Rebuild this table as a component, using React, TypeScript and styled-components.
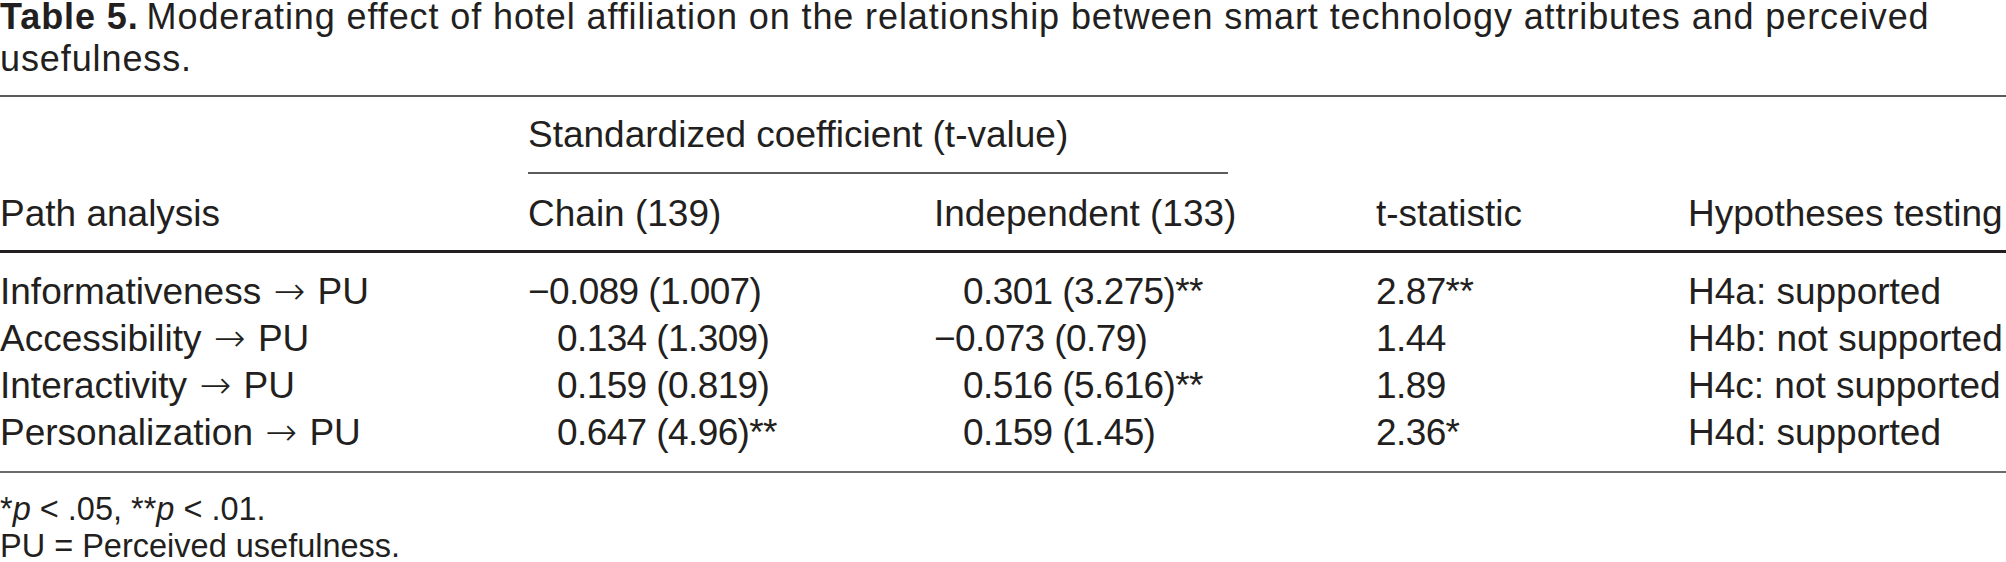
import styled, {createGlobalStyle} from "styled-components";

const GlobalStyle = createGlobalStyle`
  html, body {
    margin: 0;
    padding: 0;
    background: #ffffff;
  }
`;

const COLS = "528px 406px 442px 312px 1fr";

const Page = styled.div`
  font-family: "Liberation Sans", Arial, sans-serif;
  color: #231f20;
  width: 2006px;
`;

const Caption = styled.p`
  margin: -4px 0 15px;
  font-size: 36px;
  line-height: 42px;
  letter-spacing: 0.9px;
`;

const Label = styled.b`
  font-weight: 700;
  margin-right: 8px;
`;

const Head = styled.div`
  border-top: 2px solid #5b5b5b;
  border-bottom: 3px solid #231f20;
  padding-bottom: 13px;
`;

const Row = styled.div`
  display: grid;
  grid-template-columns: ${COLS};
`;

const Spanner = styled.div`
  grid-column: 2 / span 2;
  width: 700px;
  padding-top: 14px;
  padding-bottom: 14px;
  border-bottom: 2px solid #5b5b5b;
  font-size: 37px;
  line-height: 47px;
`;

const LabelRow = styled(Row)`
  padding-top: 16px;
`;

const Cell = styled.div<{$indent?: boolean; $num?: boolean}>`
  font-size: 37px;
  line-height: 47px;
  white-space: nowrap;
  letter-spacing: ${(p) => (p.$num ? "-0.6px" : "0")};
  padding-left: ${(p) => (p.$indent ? "29px" : "0")};
`;

const Arrow = styled.span`
  font-family: "DejaVu Sans", sans-serif;
  font-weight: 300;
  font-size: 38px;
  margin: 0 2px;
`;

const Body = styled.div`
  padding: 15px 0;
  border-bottom: 2px solid #6a6a6a;
`;

const Notes = styled.div`
  margin-top: 18px;
  font-size: 32.5px;
  line-height: 37px;
`;

const Note = styled.p`
  margin: 0;
`;

const rows = [
  {path: "Informativeness", chain: "−0.089 (1.007)", indep: "0.301 (3.275)**", t: "2.87**", h: "H4a: supported"},
  {path: "Accessibility", chain: "0.134 (1.309)", indep: "−0.073 (0.79)", t: "1.44", h: "H4b: not supported"},
  {path: "Interactivity", chain: "0.159 (0.819)", indep: "0.516 (5.616)**", t: "1.89", h: "H4c: not supported"},
  {path: "Personalization", chain: "0.647 (4.96)**", indep: "0.159 (1.45)", t: "2.36*", h: "H4d: supported"},
];

const isNeg = (v: string) => v.startsWith("−");

export default function App() {
  return (
    <Page>
      <GlobalStyle />
      <Caption>
        <Label>Table 5.</Label>
        Moderating effect of hotel affiliation on the relationship between smart technology attributes and perceived
        usefulness.
      </Caption>
      <Head>
        <Row>
          <Spanner>Standardized coefficient (t-value)</Spanner>
        </Row>
        <LabelRow>
          <Cell>Path analysis</Cell>
          <Cell>Chain (139)</Cell>
          <Cell>Independent (133)</Cell>
          <Cell>t-statistic</Cell>
          <Cell>Hypotheses testing</Cell>
        </LabelRow>
      </Head>
      <Body>
        {rows.map((r) => (
          <Row key={r.path}>
            <Cell>
              {r.path} <Arrow>→</Arrow> PU
            </Cell>
            <Cell $num $indent={!isNeg(r.chain)}>{r.chain}</Cell>
            <Cell $num $indent={!isNeg(r.indep)}>{r.indep}</Cell>
            <Cell $num>{r.t}</Cell>
            <Cell>{r.h}</Cell>
          </Row>
        ))}
      </Body>
      <Notes>
        <Note>
          *<i>p</i> &lt; .05, **<i>p</i> &lt; .01.
        </Note>
        <Note>PU = Perceived usefulness.</Note>
      </Notes>
    </Page>
  );
}
